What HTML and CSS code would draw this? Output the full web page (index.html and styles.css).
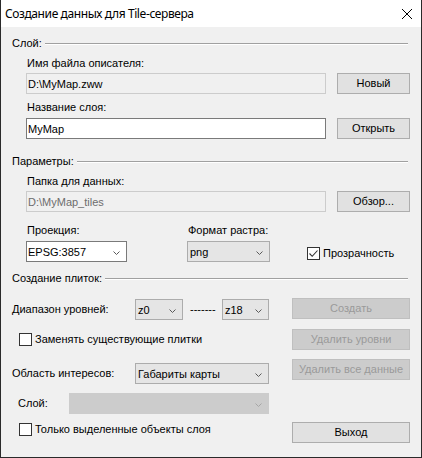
FILE: index.html
```html
<!DOCTYPE html>
<html lang="ru">
<head>
<meta charset="utf-8">
<title>Создание данных для Tile-сервера</title>
<link rel="stylesheet" href="styles.css">
</head>
<body>
<div class="window">
  <div class="titlebar">
    <span class="title">Создание данных для Tile-сервера</span>
    <svg class="close" width="10" height="10" viewBox="0 0 10 10"><path d="M0 0 L10 10 M10 0 L0 10"/></svg>
  </div>
  <div class="client">
    <div class="group-head head-layer"><span>Слой:</span><i class="rule"></i></div>
    <div class="label label-file">Имя файла описателя:</div>
    <div class="field-row row-file">
      <div class="edit readonly">D:\MyMap.zww</div>
      <button class="btn">Новый</button>
    </div>
    <div class="label label-name">Название слоя:</div>
    <div class="field-row row-name">
      <div class="edit">MyMap</div>
      <button class="btn">Открыть</button>
    </div>

    <div class="group-head head-params"><span>Параметры:</span><i class="rule"></i></div>
    <div class="label label-folder">Папка для данных:</div>
    <div class="field-row row-folder">
      <div class="edit disabled">D:\MyMap_tiles</div>
      <button class="btn">Обзор...</button>
    </div>
    <div class="params">
      <div class="pcol pcol-proj">
        <div class="plabel">Проекция:</div>
        <div class="combo edit-combo">
          <span class="val">EPSG:3857</span>
          <svg class="chev" width="7" height="4" viewBox="0 0 7 4"><path d="M0.5 0.5 L3.5 3.5 L6.5 0.5"/></svg>
        </div>
      </div>
      <div class="pcol pcol-format">
        <div class="plabel">Формат растра:</div>
        <div class="combo list">
          <span class="val">png</span>
          <svg class="chev" width="7" height="4" viewBox="0 0 7 4"><path d="M0.5 0.5 L3.5 3.5 L6.5 0.5"/></svg>
        </div>
      </div>
      <label class="check check-transp">
        <span class="box"><svg width="11" height="11" viewBox="0 0 11 11"><path d="M1.5 5.5 L4.2 8.3 L9.5 2.5"/></svg></span>Прозрачность
      </label>
    </div>

    <div class="group-head head-tiles"><span>Создание плиток:</span><i class="rule"></i></div>
    <div class="tiles">
      <div class="tiles-left">
        <div class="trow row-levels">
          <span class="tlabel">Диапазон уровней:</span>
          <div class="combo list zmin">
            <span class="val">z0</span>
            <svg class="chev" width="7" height="4" viewBox="0 0 7 4"><path d="M0.5 0.5 L3.5 3.5 L6.5 0.5"/></svg>
          </div>
          <span class="dashes">-------</span>
          <div class="combo list zmax">
            <span class="val">z18</span>
            <svg class="chev" width="7" height="4" viewBox="0 0 7 4"><path d="M0.5 0.5 L3.5 3.5 L6.5 0.5"/></svg>
          </div>
        </div>
        <label class="check check-replace"><span class="box"></span>Заменять существующие плитки</label>
        <div class="trow row-area">
          <span class="tlabel">Область интересов:</span>
          <div class="combo list area">
            <span class="val">Габариты карты</span>
            <svg class="chev" width="7" height="4" viewBox="0 0 7 4"><path d="M0.5 0.5 L3.5 3.5 L6.5 0.5"/></svg>
          </div>
        </div>
        <div class="trow row-layer">
          <span class="tlabel layer-label">Слой:</span>
          <div class="combo off layer-combo">
            <span class="val"></span>
            <svg class="chev" width="7" height="4" viewBox="0 0 7 4"><path d="M0.5 0.5 L3.5 3.5 L6.5 0.5"/></svg>
          </div>
        </div>
        <label class="check check-only"><span class="box"></span>Только выделенные объекты слоя</label>
      </div>
      <div class="tiles-right">
        <button class="btn wide off">Создать</button>
        <button class="btn wide off b-levels">Удалить уровни</button>
        <button class="btn wide off b-all">Удалить все данные</button>
        <button class="btn wide b-exit">Выход</button>
      </div>
    </div>
  </div>
</div>
</body>
</html>
```
FILE: styles.css
```css
* { box-sizing: border-box; }
html, body { margin: 0; padding: 0; background: #f0f0f0; }
body {
  font-family: "Liberation Sans", Arial, sans-serif;
  font-size: 11px;
  line-height: 13px;
  color: #000;
}
.window {
  width: 422px;
  height: 458px;
  border: 1px solid #2a2a2a;
  border-top: 0;
  background: #f0f0f0;
  display: flex;
  flex-direction: column;
}
.titlebar {
  height: 27px;
  flex: none;
  background: #fff;
  display: flex;
  align-items: center;
  justify-content: space-between;
  padding: 0 9px 0 4px;
}
.title {
  font-family: "Noto Sans", "Liberation Sans", sans-serif;
  font-size: 12px;
  line-height: 16px;
  letter-spacing: -0.4px;
}
.close { stroke: #000; stroke-width: 1; fill: none; margin-top: 1px; }

.client {
  padding: 10px 11px 0 11px;
  display: flex;
  flex-direction: column;
}

.group-head { display: flex; height: 13px; }
.group-head .rule {
  flex: 1;
  height: 2px;
  margin: 6px 2px 0 3px;
  border-top: 1px solid #a0a0a0;
  border-bottom: 1px solid #fff;
}
.head-params { margin-top: 16px; }
.head-tiles { margin-top: 10px; }

.label { margin-left: 15px; height: 13px; }
.label-file { margin-top: 7px; }
.label-name { margin-top: 7px; }
.label-folder { margin-top: 7px; }

.field-row { display: flex; margin-left: 14px; }
.row-file { margin-top: 3px; }
.row-name { margin-top: 4px; }
.row-folder { margin-top: 3px; }

.edit {
  width: 300px;
  height: 21px;
  border: 1px solid #7a7a7a;
  background: #fff;
  padding: 1px 1px 0;
  line-height: 19px;
  white-space: nowrap;
}
.edit.readonly { background: #f0f0f0; border-color: #cccccc; }
.edit.disabled { background: #f0f0f0; border-color: #cccccc; color: #6d6d6d; }

.btn {
  font: inherit;
  color: #000;
  width: 73px;
  height: 21px;
  margin: 0 0 0 11px;
  padding: 0;
  background: #e1e1e1;
  border: 1px solid #adadad;
  line-height: 19px;
  text-align: center;
}
.btn.off { background: #cccccc; border-color: #bfbfbf; color: #9a9a9a; }

.params { display: flex; margin-top: 12px; margin-left: 14px; }
.pcol { display: flex; flex-direction: column; }
.plabel { height: 13px; margin-left: 1px; margin-bottom: 4px; }
.pcol-proj { width: 101px; }
.pcol-format { width: 83px; margin-left: 60px; }

.combo {
  height: 21px;
  border: 1px solid #7a7a7a;
  background: #fff;
  display: flex;
  align-items: center;
  justify-content: space-between;
  padding: 0 6px 0 1px;
  white-space: nowrap;
}
.combo .val { line-height: 19px; padding-top: 1px; }
.combo .chev { fill: none; stroke: #5a5a5a; stroke-width: 1; margin-top: 2px; }
.combo.list { background: #e5e5e5; border-color: #acacac; padding-left: 2px; }
.combo.off { background: #cccccc; border-color: #cccccc; }
.combo.off .chev { stroke: #a6a6a6; }

.check { display: flex; align-items: center; height: 13px; white-space: nowrap; }
.check .box {
  width: 13px;
  height: 13px;
  border: 1px solid #333333;
  background: #fff;
  margin-right: 3px;
  flex: none;
  display: flex;
}
.check .box svg { fill: none; stroke: #333; stroke-width: 1.1; }
.check-transp { margin-left: 37px; margin-top: 23px; }

.tiles { display: flex; margin-top: 13px; }
.tiles-left { flex: 1; display: flex; flex-direction: column; }
.tiles-right { width: 118px; display: flex; flex-direction: column; }
.btn.wide { width: 118px; margin-left: 0; }
.b-levels { margin-top: 10px !important; }
.b-all { margin-top: 9px !important; }
.b-exit { margin-top: 42px !important; }

.trow { display: flex; align-items: center; height: 21px; }
.row-levels { margin-top: 1px; }
.tlabel { width: 123px; flex: none; }
.zmin { width: 48px; flex: none; }
.dashes { width: 39px; flex: none; padding-left: 7px; overflow: hidden; }
.zmax { width: 47px; flex: none; }
.check-replace { margin-top: 13px; margin-left: 7px; }
.row-area { margin-top: 17px; }
.area { width: 134px; }
.row-layer { margin-top: 9px; }
.layer-label { width: 51px; margin-left: 6px; }
.layer-combo { width: 200px; }
.check-only { margin-top: 9px; margin-left: 7px; }
```
